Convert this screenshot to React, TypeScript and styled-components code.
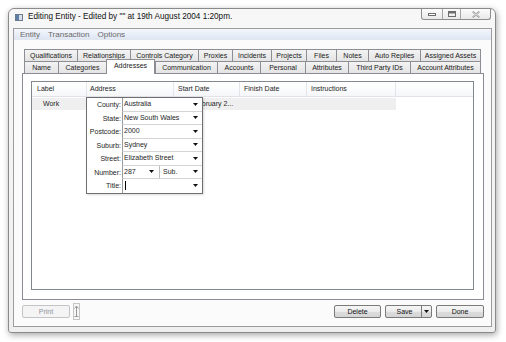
import React from 'react';
import styled, { createGlobalStyle } from 'styled-components';

const GlobalStyle = createGlobalStyle`
  html, body {
    margin: 0;
    padding: 0;
    background: #ffffff;
  }
  body {
    font-family: "Liberation Sans", Arial, sans-serif;
    color: #1c1c1c;
  }
  * {
    box-sizing: border-box;
  }
`;

const Page = styled.div`
  width: 506px;
  height: 342px;
  padding: 8px 0 0 8px;
`;

const Window = styled.div`
  width: 488px;
  height: 325px;
  border: 1px solid #8a8a8a;
  border-radius: 6px 6px 3px 3px;
  background: linear-gradient(#f7f7f7, #efefef);
  box-shadow: 1px 2px 6px rgba(0, 0, 0, 0.35);
  display: flex;
  flex-direction: column;
  padding: 0 3px 5px 4px;
`;

const TitleBar = styled.div`
  height: 19px;
  display: flex;
  align-items: flex-start;
`;

const AppIcon = styled.svg`
  margin: 5px 0 0 2px;
  flex-shrink: 0;
`;

const TitleText = styled.div`
  margin: 2px 0 0 5px;
  font-size: 8.2px;
  line-height: 11px;
  color: #111;
  white-space: nowrap;
  flex: 1;
`;

const WinButtons = styled.div`
  display: flex;
  height: 11px;
  margin-right: 1px;
  border: 1px solid #8d8d8d;
  border-top: none;
  border-radius: 0 0 3px 3px;
  overflow: hidden;
  background: linear-gradient(#fbfbfb, #e9e9e9);
`;

const WinButton = styled.div<{ w: number; last?: boolean }>`
  width: ${p => p.w}px;
  height: 100%;
  display: flex;
  align-items: center;
  justify-content: center;
  border-right: ${p => (p.last ? 'none' : '1px solid #a6a6a6')};
`;

const Client = styled.div`
  flex: 1;
  border: 1px solid #9c9c9c;
  background: #fbfbfb;
  display: flex;
  flex-direction: column;
  min-height: 0;
`;

const MenuBar = styled.div`
  height: 11px;
  display: flex;
  align-items: center;
  padding-left: 2px;
  background: linear-gradient(#f4f6fc, #dfe6f4);
  border-bottom: 1px solid #e2e6ee;
`;

const MenuItem = styled.span`
  padding: 0 4px;
  font-size: 8px;
  line-height: 11px;
  color: #6a6a6a;
`;

const Body = styled.div`
  flex: 1;
  display: flex;
  flex-direction: column;
  padding: 9px 7px 6px 8px;
  min-height: 0;
`;

const TabStrip = styled.div`
  margin-left: 2px;
  display: flex;
  flex-direction: column;
  position: relative;
  z-index: 2;
`;

const TabRow = styled.div`
  display: flex;
  height: 12px;
  align-items: flex-end;
`;

const Tab = styled.div<{ w: number; last?: boolean; selected?: boolean }>`
  width: ${p => p.w}px;
  height: ${p => (p.selected ? 15 : 12)}px;
  margin-top: ${p => (p.selected ? -3 : 0)}px;
  margin-bottom: ${p => (p.selected ? -1 : 0)}px;
  border: 1px solid #8c8e94;
  border-bottom: none;
  border-right: ${p => (p.last || p.selected ? '1px solid #8c8e94' : 'none')};
  background: ${p => (p.selected ? '#ffffff' : 'linear-gradient(#f3f3f3, #e4e4e4)')};
  font-size: 7px;
  line-height: 11px;
  text-align: center;
  white-space: nowrap;
  color: #1a1a1a;
  position: relative;
  z-index: ${p => (p.selected ? 3 : 1)};
`;

const Panel = styled.div`
  flex: 1;
  border: 1px solid #898c95;
  background: #ffffff;
  padding: 7px 9px 9px 8px;
  display: flex;
  min-height: 0;
`;

const ListView = styled.div`
  flex: 1;
  border: 1px solid #828790;
  background: #ffffff;
  position: relative;
`;

const HeaderRow = styled.div`
  display: flex;
  height: 15px;
  border-bottom: 1px solid #e1e3e8;
  background: linear-gradient(#ffffff, #f6f7f9);
`;

const HeaderCell = styled.div<{ w?: number; pad: number }>`
  width: ${p => (p.w ? `${p.w}px` : 'auto')};
  flex: ${p => (p.w ? '0 0 auto' : '1')};
  padding-left: ${p => p.pad}px;
  border-right: ${p => (p.w ? '1px solid #e3e5ea' : 'none')};
  font-size: 7px;
  line-height: 14px;
  white-space: nowrap;
  overflow: hidden;
  color: #1e1e1e;
`;

const DataRow = styled.div`
  display: flex;
  width: 364px;
  height: 12px;
  margin-top: 1px;
  background: #efefef;
`;

const DataCell = styled.div<{ w: number; pad: number }>`
  width: ${p => p.w}px;
  padding-left: ${p => p.pad}px;
  font-size: 7px;
  line-height: 12px;
  white-space: nowrap;
  overflow: hidden;
  color: #1e1e1e;
`;

const AddressPopup = styled.div`
  position: absolute;
  left: 54px;
  top: 15px;
  width: 117px;
  border: 1px solid #6f6f6f;
  background: #ffffff;
  display: grid;
  grid-template-columns: 35px 1fr;
  grid-auto-rows: 13.5px;
  box-shadow: 1px 1px 2px rgba(0, 0, 0, 0.15);
  z-index: 5;
`;

const FieldLabel = styled.div`
  font-size: 7px;
  line-height: 13px;
  text-align: right;
  padding-right: 1px;
  white-space: nowrap;
  color: #1e1e1e;
`;

const FieldValue = styled.div<{ lastRow?: boolean }>`
  display: flex;
  align-items: center;
  border-left: 1px solid #9a9a9a;
  border-bottom: ${p => (p.lastRow ? 'none' : '1px solid #d4d4d4')};
  font-size: 7px;
  color: #1e1e1e;
  min-width: 0;
`;

const ValuePart = styled.div<{ w?: number; divider?: boolean; pad?: number }>`
  display: flex;
  align-items: center;
  height: 100%;
  width: ${p => (p.w ? `${p.w}px` : 'auto')};
  flex: ${p => (p.w ? '0 0 auto' : '1')};
  padding-left: ${p => p.pad ?? 1}px;
  border-left: ${p => (p.divider ? '1px solid #bdbdbd' : 'none')};
  white-space: nowrap;
`;

const ValueText = styled.span`
  flex: 1;
  line-height: 12px;
`;

const Caret = styled.span`
  width: 1px;
  height: 9px;
  background: #000;
  margin-left: 1px;
  flex: 0 0 auto;
`;

const ArrowBox = styled.span<{ mr: number }>`
  display: flex;
  margin-right: ${p => p.mr}px;
`;

const Footer = styled.div`
  display: flex;
  align-items: center;
  height: 17px;
  margin-top: 3px;
`;

const Button = styled.div<{ w: number; disabled?: boolean }>`
  width: ${p => p.w}px;
  height: 13px;
  border: 1px solid ${p => (p.disabled ? '#c2c4c8' : '#7a7a7a')};
  border-radius: 2px;
  background: ${p => (p.disabled ? '#f4f4f4' : 'linear-gradient(#f6f6f6 0%, #ebebeb 50%, #dddddd 51%, #d5d5d5 100%)')};
  font-size: 7px;
  line-height: 11px;
  text-align: center;
  color: ${p => (p.disabled ? '#8d94a0' : '#111')};
  display: flex;
  align-items: center;
  justify-content: center;
`;

const SplitButton = styled(Button)`
  justify-content: flex-start;
  padding: 0;
`;

const SplitLabel = styled.span`
  flex: 1;
  text-align: center;
  padding-left: 2px;
`;

const SplitArrow = styled.span`
  width: 10px;
  height: 100%;
  border-left: 1px solid #7a7a7a;
  display: flex;
  align-items: center;
  justify-content: center;
`;

const SideIcon = styled.div`
  width: 7px;
  height: 17px;
  margin-left: 3px;
  border: 1px solid #c6c6c6;
  background: #f6f6f6;
  display: flex;
  align-items: center;
  justify-content: center;
`;

const RightButtons = styled.div`
  margin-left: auto;
  display: flex;
  gap: 4px;
`;

const DownArrow = ({ w = 5 }: { w?: number }) => (
  <svg width={w} height={3} viewBox="0 0 5 3">
    <polygon points="0,0 5,0 2.5,3" fill="#111" />
  </svg>
);

const tabsTop = [
  { label: 'Qualifications', w: 53 },
  { label: 'Relationships', w: 53 },
  { label: 'Controls Category', w: 68 },
  { label: 'Proxies', w: 34 },
  { label: 'Incidents', w: 39 },
  { label: 'Projects', w: 35 },
  { label: 'Files', w: 30 },
  { label: 'Notes', w: 32 },
  { label: 'Auto Replies', w: 52 },
  { label: 'Assigned Assets', w: 61 },
];

const tabsBottom = [
  { label: 'Name', w: 34 },
  { label: 'Categories', w: 48 },
  { label: 'Addresses', w: 49, selected: true },
  { label: 'Communication', w: 62 },
  { label: 'Accounts', w: 43 },
  { label: 'Personal', w: 45 },
  { label: 'Attributes', w: 43 },
  { label: 'Third Party IDs', w: 62 },
  { label: 'Account Attributes', w: 71 },
];

const columns = [
  { title: 'Label', w: 55, pad: 5 },
  { title: 'Address', w: 87, pad: 3 },
  { title: 'Start Date', w: 66, pad: 4 },
  { title: 'Finish Date', w: 67, pad: 4 },
  { title: 'Instructions', w: 89, pad: 4 },
];

const addressFields = [
  { label: 'County:', value: 'Australia' },
  { label: 'State:', value: 'New South Wales' },
  { label: 'Postcode:', value: '2000' },
  { label: 'Suburb:', value: 'Sydney' },
  { label: 'Street:', value: 'Elizabeth Street' },
];

const App: React.FC = () => {
  return (
    <>
      <GlobalStyle />
      <Page>
        <Window>
          <TitleBar>
            <AppIcon width={8} height={7} viewBox="0 0 8 7">
              <rect x="0.5" y="0.5" width="7" height="6" fill="#d9e0e8" stroke="#6b7b8e" />
              <rect x="1" y="1" width="3" height="5" fill="#5d7ea6" />
            </AppIcon>
            <TitleText>Editing Entity - Edited by "" at 19th August 2004 1:20pm.</TitleText>
            <WinButtons>
              <WinButton w={21}>
                <svg width={8} height={4} viewBox="0 0 8 4">
                  <rect x="0.5" y="1.5" width="7" height="2" fill="#fff" stroke="#6d6d6d" />
                </svg>
              </WinButton>
              <WinButton w={18}>
                <svg width={8} height={6} viewBox="0 0 8 6">
                  <rect x="0.5" y="0.5" width="7" height="5" fill="none" stroke="#6d6d6d" />
                  <rect x="1" y="1" width="6" height="1.5" fill="#6d6d6d" />
                </svg>
              </WinButton>
              <WinButton w={29} last>
                <svg width={8} height={7} viewBox="0 0 8 7">
                  <path d="M1 0.5 L4 2.7 L7 0.5 L7.5 1 L5 3.5 L7.5 6 L7 6.5 L4 4.3 L1 6.5 L0.5 6 L3 3.5 L0.5 1 Z" fill="#fff" stroke="#7a7a7a" strokeWidth="0.7" />
                </svg>
              </WinButton>
            </WinButtons>
          </TitleBar>

          <Client>
            <MenuBar>
              <MenuItem>Entity</MenuItem>
              <MenuItem>Transaction</MenuItem>
              <MenuItem>Options</MenuItem>
            </MenuBar>

            <Body>
              <TabStrip>
                <TabRow>
                  {tabsTop.map((t, i) => (
                    <Tab key={t.label} w={t.w} last={i === tabsTop.length - 1}>
                      {t.label}
                    </Tab>
                  ))}
                </TabRow>
                <TabRow>
                  {tabsBottom.map((t, i) => (
                    <Tab
                      key={t.label}
                      w={t.w}
                      selected={t.selected}
                      last={i === tabsBottom.length - 1}
                    >
                      {t.label}
                    </Tab>
                  ))}
                </TabRow>
              </TabStrip>

              <Panel>
                <ListView>
                  <HeaderRow>
                    {columns.map(c => (
                      <HeaderCell key={c.title} w={c.w} pad={c.pad}>
                        {c.title}
                      </HeaderCell>
                    ))}
                    <HeaderCell pad={0} />
                  </HeaderRow>
                  <DataRow>
                    <DataCell w={55} pad={11}>Work</DataCell>
                    <DataCell w={87} pad={3} />
                    <DataCell w={66} pad={4}>19th February 2...</DataCell>
                    <DataCell w={67} pad={4} />
                    <DataCell w={89} pad={4} />
                  </DataRow>

                  <AddressPopup>
                    {addressFields.map(f => (
                      <React.Fragment key={f.label}>
                        <FieldLabel>{f.label}</FieldLabel>
                        <FieldValue>
                          <ValuePart>
                            <ValueText>{f.value}</ValueText>
                            <ArrowBox mr={4}><DownArrow /></ArrowBox>
                          </ValuePart>
                        </FieldValue>
                      </React.Fragment>
                    ))}
                    <FieldLabel>Number:</FieldLabel>
                    <FieldValue>
                      <ValuePart w={36}>
                        <ValueText>287</ValueText>
                        <ArrowBox mr={5}><DownArrow /></ArrowBox>
                      </ValuePart>
                      <ValuePart divider pad={3}>
                        <ValueText>Sub.</ValueText>
                        <ArrowBox mr={4}><DownArrow /></ArrowBox>
                      </ValuePart>
                    </FieldValue>
                    <FieldLabel>Title:</FieldLabel>
                    <FieldValue lastRow>
                      <ValuePart>
                        <Caret />
                        <ValueText />
                        <ArrowBox mr={4}><DownArrow /></ArrowBox>
                      </ValuePart>
                    </FieldValue>
                  </AddressPopup>
                </ListView>
              </Panel>

              <Footer>
                <Button w={48} disabled>Print</Button>
                <SideIcon>
                  <svg width={5} height={13} viewBox="0 0 5 13">
                    <path d="M2.5 1 L2.5 11" stroke="#9a9a9a" strokeWidth="1" />
                    <path d="M0.5 3.5 L2.5 1 L4.5 3.5" stroke="#9a9a9a" strokeWidth="1" fill="none" />
                    <path d="M0.5 11.5 L4.5 11.5" stroke="#9a9a9a" strokeWidth="1" />
                  </svg>
                </SideIcon>
                <RightButtons>
                  <Button w={47}>Delete</Button>
                  <SplitButton w={47}>
                    <SplitLabel>Save</SplitLabel>
                    <SplitArrow><DownArrow /></SplitArrow>
                  </SplitButton>
                  <Button w={48}>Done</Button>
                </RightButtons>
              </Footer>
            </Body>
          </Client>
        </Window>
      </Page>
    </>
  );
};

export default App;
